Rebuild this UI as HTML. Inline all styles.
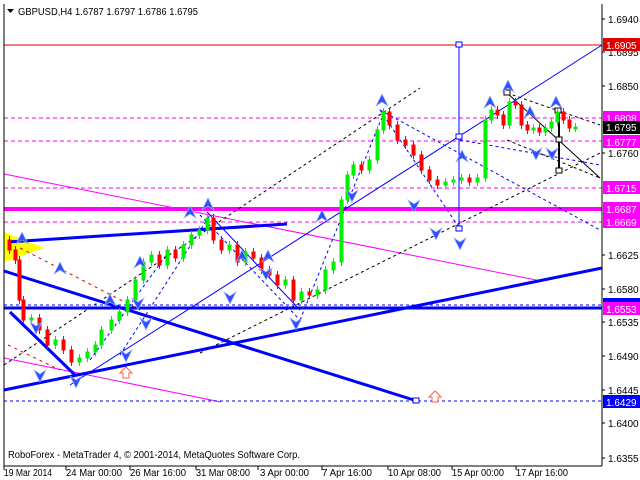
<!DOCTYPE html>
<html><head><meta charset="utf-8"><style>
html,body{margin:0;padding:0;background:#fff;}
svg{display:block;font-family:"Liberation Sans",sans-serif;}
</style></head><body>
<svg width="640" height="480" viewBox="0 0 640 480" xmlns="http://www.w3.org/2000/svg">
<rect width="640" height="480" fill="#fff"/>
<line x1="4" y1="45" x2="602" y2="45" stroke="#e00000"/>
<g stroke="#ff00ff" stroke-dasharray="4,3">
<line x1="4" y1="118" x2="602" y2="118"/>
<line x1="4" y1="141" x2="602" y2="141"/>
<line x1="4" y1="188" x2="602" y2="188"/>
<line x1="4" y1="222" x2="602" y2="222"/>
</g>
<line x1="4" y1="209" x2="602" y2="209" stroke="#ff00ff" stroke-width="4"/>
<line x1="4" y1="174" x2="541" y2="281" stroke="#ff00ff"/>
<line x1="4" y1="358" x2="221" y2="402" stroke="#ff00ff"/>
<polygon points="4,232 4,262 44,248" fill="#ffff00"/>
<g stroke="#000" stroke-dasharray="3,3" fill="none">
<line x1="4" y1="365" x2="420" y2="88"/>
<line x1="200" y1="353" x2="600" y2="153"/>
<line x1="507" y1="93" x2="600" y2="125"/>
<line x1="507" y1="140" x2="600" y2="178"/>
</g>
<line x1="507" y1="93" x2="600" y2="178" stroke="#000"/>
<line x1="559" y1="112" x2="559" y2="171" stroke="#000" stroke-width="2"/>
<g fill="#fff" stroke="#000">
<rect x="556" y="137" width="6" height="5"/><rect x="556" y="168" width="6" height="5"/>
<rect x="504" y="90" width="6" height="5"/><rect x="555" y="108" width="6" height="5"/>
</g>
<g stroke="#e00000" stroke-dasharray="3,4">
<line x1="20" y1="248" x2="140" y2="310"/>
<line x1="8" y1="345" x2="60" y2="370"/>
</g>
<g stroke="#0000ff" stroke-dasharray="3,3" fill="none">
<line x1="380" y1="110" x2="600" y2="230"/>
<line x1="380" y1="110" x2="460" y2="229"/>
<line x1="200" y1="215" x2="300" y2="320"/>
<line x1="120" y1="355" x2="210" y2="215"/>
<line x1="90" y1="360" x2="170" y2="250"/>
<line x1="300" y1="320" x2="385" y2="110"/>
<line x1="460" y1="140" x2="600" y2="165"/>
<line x1="4" y1="305" x2="602" y2="305"/>
<line x1="4" y1="401" x2="602" y2="401"/>
</g>
<g stroke="#0000ff" stroke-width="3" fill="none">
<line x1="4" y1="271" x2="417" y2="401"/>
<line x1="4" y1="390" x2="602" y2="268"/>
<line x1="4" y1="308" x2="602" y2="308"/>
<line x1="8" y1="242" x2="287" y2="224"/>
<line x1="10" y1="312" x2="75" y2="375"/>
</g>
<g stroke="#0000ff" fill="none">
<line x1="70" y1="385" x2="602" y2="45"/>
<line x1="459" y1="45" x2="459" y2="229"/>
<line x1="207" y1="212" x2="300" y2="310"/>
</g>
<g fill="#fff" stroke="#0000ff">
<rect x="456" y="42" width="6" height="5"/><rect x="456" y="134" width="6" height="5"/>
<rect x="456" y="226" width="6" height="5"/><rect x="413" y="398" width="6" height="5"/>
</g>
<g fill="#ff0000" stroke="#ff0000">
<path d="M9.5,236V254M15.5,246V264M19.5,256V304M23.5,296V324M39.5,314V334M47.5,326V349M63.5,336V354M71.5,346V366M159.5,251V269M175.5,246V262M213.5,214V244M221.5,236V254M237.5,241V266M253.5,248V262M261.5,254V274M269.5,266V279M277.5,271V289M293.5,276V304M309.5,288V299M361.5,161V174M389.5,108V129M397.5,121V144M405.5,136V149M413.5,141V159M421.5,151V174M429.5,166V184M437.5,176V189M469.5,174V186M497.5,106V119M503.5,111V129M515.5,98V109M521.5,101V129M527.5,121V134M539.5,124V136M563.5,108V124M569.5,116V132"/>
<rect x="8" y="240" width="3" height="10"/><rect x="14" y="250" width="3" height="10"/>
<rect x="18" y="260" width="3" height="40"/><rect x="22" y="300" width="3" height="20"/>
<rect x="38" y="318" width="3" height="12"/><rect x="46" y="330" width="3" height="15"/>
<rect x="62" y="340" width="3" height="10"/><rect x="70" y="350" width="3" height="12"/>
<rect x="158" y="255" width="3" height="10"/><rect x="174" y="250" width="3" height="8"/>
<rect x="212" y="218" width="3" height="22"/><rect x="220" y="240" width="3" height="10"/>
<rect x="236" y="245" width="3" height="17"/><rect x="252" y="252" width="3" height="6"/>
<rect x="260" y="258" width="3" height="12"/><rect x="268" y="270" width="3" height="5"/>
<rect x="276" y="275" width="3" height="10"/><rect x="292" y="280" width="3" height="20"/>
<rect x="308" y="292" width="3" height="3"/><rect x="360" y="165" width="3" height="5"/>
<rect x="388" y="112" width="3" height="13"/><rect x="396" y="125" width="3" height="15"/>
<rect x="404" y="140" width="3" height="5"/><rect x="412" y="145" width="3" height="10"/>
<rect x="420" y="155" width="3" height="15"/><rect x="428" y="170" width="3" height="10"/>
<rect x="436" y="180" width="3" height="5"/><rect x="468" y="178" width="3" height="4"/>
<rect x="496" y="110" width="3" height="5"/><rect x="502" y="115" width="3" height="10"/>
<rect x="514" y="102" width="3" height="3"/><rect x="520" y="105" width="3" height="20"/>
<rect x="526" y="125" width="3" height="5"/><rect x="538" y="128" width="3" height="4"/>
<rect x="562" y="112" width="3" height="8"/><rect x="568" y="120" width="3" height="8"/>
</g>
<g fill="#00ee00" stroke="#00ee00">
<path d="M31.5,314V324M55.5,336V349M79.5,354V366M87.5,348V362M95.5,341V356M101.5,326V349M111.5,316V334M119.5,308V324M127.5,296V316M135.5,276V304M143.5,258V284M151.5,251V266M167.5,246V269M183.5,241V262M191.5,231V249M199.5,226V239M207.5,214V234M229.5,241V254M245.5,248V266M285.5,276V289M301.5,288V304M317.5,286V299M325.5,266V294M333.5,258V274M341.5,196V266M347.5,171V204M353.5,161V179M369.5,156V174M377.5,126V164M383.5,108V134M445.5,178V189M453.5,176V186M461.5,174V184M477.5,174V186M485.5,116V182M491.5,106V124M509.5,98V129M533.5,124V134M545.5,124V136M551.5,118V132M557.5,108V126M575.5,123V132"/>
<rect x="30" y="318" width="3" height="2"/><rect x="54" y="340" width="3" height="5"/>
<rect x="78" y="358" width="3" height="4"/><rect x="86" y="352" width="3" height="6"/>
<rect x="94" y="345" width="3" height="7"/><rect x="100" y="330" width="3" height="15"/>
<rect x="110" y="320" width="3" height="10"/><rect x="118" y="312" width="3" height="8"/>
<rect x="126" y="300" width="3" height="12"/><rect x="134" y="280" width="3" height="20"/>
<rect x="142" y="262" width="3" height="18"/><rect x="150" y="255" width="3" height="7"/>
<rect x="166" y="250" width="3" height="15"/><rect x="182" y="245" width="3" height="13"/>
<rect x="190" y="235" width="3" height="10"/><rect x="198" y="230" width="3" height="5"/>
<rect x="206" y="218" width="3" height="12"/><rect x="228" y="245" width="3" height="5"/>
<rect x="244" y="252" width="3" height="10"/><rect x="284" y="280" width="3" height="5"/>
<rect x="300" y="292" width="3" height="8"/><rect x="316" y="290" width="3" height="5"/>
<rect x="324" y="270" width="3" height="20"/><rect x="332" y="262" width="3" height="8"/>
<rect x="340" y="200" width="3" height="62"/><rect x="346" y="175" width="3" height="25"/>
<rect x="352" y="165" width="3" height="10"/><rect x="368" y="160" width="3" height="10"/>
<rect x="376" y="130" width="3" height="30"/><rect x="382" y="112" width="3" height="18"/>
<rect x="444" y="182" width="3" height="3"/><rect x="452" y="180" width="3" height="2"/>
<rect x="460" y="178" width="3" height="2"/><rect x="476" y="178" width="3" height="4"/>
<rect x="484" y="120" width="3" height="58"/><rect x="490" y="110" width="3" height="10"/>
<rect x="508" y="102" width="3" height="23"/><rect x="532" y="128" width="3" height="2"/>
<rect x="544" y="128" width="3" height="4"/><rect x="550" y="122" width="3" height="6"/>
<rect x="556" y="112" width="3" height="10"/><rect x="574" y="127" width="3" height="2"/>
</g>
<g fill="#3050ff" stroke="#9ab0ff" stroke-width="0.7">
<path d="M16,244 l6,-12 l6,12 l-6,-4z M202,210 l6,-12 l6,12 l-6,-4z M184,218 l6,-12 l6,12 l-6,-4z M134,268 l6,-12 l6,12 l-6,-4z M54,274 l6,-12 l6,12 l-6,-4z M104,306 l6,-12 l6,12 l-6,-4z M376,106 l6,-12 l6,12 l-6,-4z M484,108 l6,-12 l6,12 l-6,-4z M502,92 l6,-12 l6,12 l-6,-4z M550,108 l6,-12 l6,12 l-6,-4z M524,118 l6,-12 l6,12 l-6,-4z M456,162 l6,-12 l6,12 l-6,-4z M316,222 l6,-12 l6,12 l-6,-4z M236,262 l6,-12 l6,12 l-6,-4z M262,262 l6,-12 l6,12 l-6,-4z"/>
<path d="M30,322 l6,4 l6,-4 l-6,12z M34,370 l6,4 l6,-4 l-6,12z M70,376 l6,4 l6,-4 l-6,12z M120,350 l6,4 l6,-4 l-6,12z M132,298 l6,4 l6,-4 l-6,12z M140,318 l6,4 l6,-4 l-6,12z M290,318 l6,4 l6,-4 l-6,12z M346,190 l6,4 l6,-4 l-6,12z M408,200 l6,4 l6,-4 l-6,12z M430,228 l6,4 l6,-4 l-6,12z M454,238 l6,4 l6,-4 l-6,12z M530,148 l6,4 l6,-4 l-6,12z M546,148 l6,4 l6,-4 l-6,12z M260,268 l6,4 l6,-4 l-6,12z M224,292 l6,4 l6,-4 l-6,12z"/>
</g>
<g fill="#fff" stroke="#ff6040">
<path d="M123,378 v-5 h-3 l6,-6 l6,6 h-3 v5 z"/>
<path d="M432,402 v-5 h-3 l6,-6 l6,6 h-3 v5 z"/>
</g>
<line x1="602" y1="4" x2="602" y2="466" stroke="#000"/>
<line x1="4" y1="466" x2="602" y2="466" stroke="#000"/>
<line x1="4" y1="4" x2="4" y2="466" stroke="#000"/>
<g font-size="10" fill="#000">
<path d="M7,9 h7 l-3.5,4 z"/>
<text x="18" y="15" textLength="180" lengthAdjust="spacingAndGlyphs">GBPUSD,H4  1.6787 1.6797 1.6786 1.6795</text>
<text x="8" y="458" textLength="292" lengthAdjust="spacingAndGlyphs">RoboForex - MetaTrader 4, © 2001-2014, MetaQuotes Software Corp.</text>
<text x="608" y="23">1.6940</text><text x="608" y="56">1.6895</text>
<text x="608" y="90">1.6850</text><text x="608" y="157">1.6760</text>
<text x="608" y="259">1.6625</text><text x="608" y="293">1.6580</text>
<text x="608" y="326">1.6535</text><text x="608" y="360">1.6490</text>
<text x="608" y="394">1.6445</text><text x="608" y="427">1.6400</text>
<text x="608" y="462">1.6355</text>
<text x="4" y="476" textLength="48" lengthAdjust="spacingAndGlyphs">19 Mar 2014</text>
<text x="66" y="476" textLength="56" lengthAdjust="spacingAndGlyphs">24 Mar 00:00</text>
<text x="130" y="476" textLength="56" lengthAdjust="spacingAndGlyphs">26 Mar 16:00</text>
<text x="196" y="476" textLength="54" lengthAdjust="spacingAndGlyphs">31 Mar 08:00</text>
<text x="260" y="476" textLength="49" lengthAdjust="spacingAndGlyphs">3 Apr 00:00</text>
<text x="322" y="476" textLength="50" lengthAdjust="spacingAndGlyphs">7 Apr 16:00</text>
<text x="388" y="476" textLength="53" lengthAdjust="spacingAndGlyphs">10 Apr 08:00</text>
<text x="452" y="476" textLength="52" lengthAdjust="spacingAndGlyphs">15 Apr 00:00</text>
<text x="516" y="476" textLength="52" lengthAdjust="spacingAndGlyphs">17 Apr 16:00</text>
</g>
<g font-size="10" fill="#fff">
<rect x="603" y="38" width="37" height="13" fill="#e00000"/><text x="606" y="49">1.6905</text>
<rect x="603" y="111" width="37" height="13" fill="#ff00ff"/><text x="606" y="122">1.6808</text>
<rect x="603" y="121" width="37" height="13" fill="#000"/><text x="606" y="131">1.6795</text>
<rect x="603" y="135" width="37" height="13" fill="#ff00ff"/><text x="606" y="146">1.6777</text>
<rect x="603" y="181" width="37" height="13" fill="#ff00ff"/><text x="606" y="192">1.6715</text>
<rect x="603" y="202" width="37" height="13" fill="#ff00ff"/><text x="606" y="213">1.6687</text>
<rect x="603" y="215" width="37" height="13" fill="#ff00ff"/><text x="606" y="226">1.6669</text>
<rect x="603" y="298" width="37" height="5" fill="#0000ff"/>
<rect x="603" y="302" width="37" height="13" fill="#ff00ff"/><text x="606" y="313">1.6553</text>
<rect x="603" y="395" width="37" height="13" fill="#0000ff"/><text x="606" y="406">1.6429</text>
</g>
<g stroke="#000"><path d="M602,19h3M602,52h3M602,86h3M602,153h3M602,255h3M602,289h3M602,322h3M602,356h3M602,390h3M602,423h3M602,458h3M4,466v4M66,466v4M130,466v4M196,466v4M258,466v4M322,466v4M388,466v4M452,466v4M516,466v4"/></g>
</svg>
</body></html>
